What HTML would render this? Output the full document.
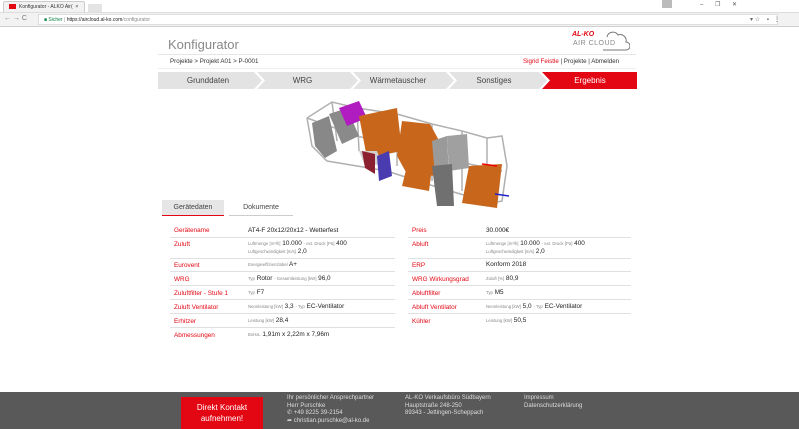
<!DOCTYPE html>
<html><head><meta charset="utf-8"><style>
*{margin:0;padding:0;box-sizing:border-box}
body{width:799px;height:429px;overflow:hidden;background:#fff;font-family:"Liberation Sans",sans-serif;position:relative;color:#333}
.abs{position:absolute}
.tabbar{left:0;top:0;width:799px;height:13px;background:#fff}
.addr{left:0;top:12px;width:799px;height:15px;background:#f2f2f2;border-bottom:1px solid #d0d0d0;border-top:1px solid #ddd}
.t{font-size:5px;white-space:nowrap}
.step{top:72px;height:17px;font-size:8px;color:#444;text-align:center;line-height:17px}
.lab{font-size:6.4px;color:#e30613;white-space:nowrap}
.val{font-size:6.4px;color:#222;white-space:nowrap}
.sm{font-size:4.3px;color:#888}
.hr{height:1px;background:#e0e0e0}
.foot{font-size:6px;color:#ddd;line-height:7.5px;white-space:nowrap}
</style></head><body>
<div class="abs tabbar"></div>
<div class="abs" style="left:3px;top:1px;width:82px;height:12px;background:#f2f2f2;border:1px solid #ccc;border-bottom:none;border-radius:2px 2px 0 0"></div>
<div class="abs" style="left:9px;top:4px;width:7px;height:5px;background:#e30613"></div>
<div class="abs t" style="left:19px;top:4px;color:#333">Konfigurator - ALKO Air(&nbsp;&nbsp;×</div>
<div class="abs" style="left:88px;top:4px;width:14px;height:8px;background:#e4e4e4"></div>
<div class="abs" style="left:662px;top:0;width:10px;height:8px;background:#bbb"></div>
<div class="abs t" style="left:700px;top:1px;color:#555;font-size:6px">–&nbsp;&nbsp;&nbsp;&nbsp;&nbsp;&nbsp;&nbsp;❐&nbsp;&nbsp;&nbsp;&nbsp;&nbsp;&nbsp;&nbsp;✕</div>
<div class="abs addr"></div>
<div class="abs t" style="left:4px;top:15px;color:#777;font-size:7px">←&nbsp;→&nbsp;C</div>
<div class="abs" style="left:38px;top:14px;width:740px;height:11px;background:#fff;border:1px solid #ddd"></div>
<div class="abs t" style="left:44px;top:17px;color:#0b8043">■ Sicher <span style="color:#999">|</span> <span style="color:#222">https://aircloud.al-ko.com</span><span style="color:#888">/configurator</span></div>
<div class="abs t" style="left:750px;top:16px;color:#666;font-size:6px">▾ ☆&nbsp;&nbsp;&nbsp;&nbsp;▪&nbsp;&nbsp;&nbsp;⋮</div>

<div class="abs" style="left:168px;top:37px;font-size:13px;color:#888">Konfigurator</div>
<div class="abs" style="left:158px;top:54px;width:478px;height:1px;background:#e6e6e6"></div>
<div class="abs" style="left:572px;top:31px;font-size:7px;font-weight:bold;color:#e30613;font-style:italic">AL-KO</div>
<div class="abs" style="left:573px;top:40px;font-size:7px;color:#888;letter-spacing:.5px">AIR CLOUD</div>
<svg class="abs" style="left:600px;top:30px" width="30" height="22"><path d="M3 20 H26 a4 4 0 0 0 0-8 a6 6 0 0 0-8-7 a6 6 0 0 0-11 2" fill="none" stroke="#777" stroke-width="1"/></svg>
<div class="abs" style="left:170px;top:58px;font-size:6.2px;color:#333">Projekte &gt; Projekt A01 &gt; P-0001</div>
<div class="abs" style="left:523px;top:58px;font-size:6.2px;color:#333;white-space:nowrap"><span style="color:#e30613">Sigrid Feistle</span> | Projekte | Abmelden</div>
<div class="abs" style="left:158px;top:68px;width:478px;height:1px;background:#eee"></div>

<svg class="abs" style="left:158px;top:72px" width="479" height="17">
<polygon points="0,0 96,0 104,8.5 96,17 0,17" fill="#e3e3e3"/>
<polygon points="99,0 192,0 200,8.5 192,17 99,17 107,8.5" fill="#e3e3e3"/>
<polygon points="195,0 288,0 296,8.5 288,17 195,17 203,8.5" fill="#e3e3e3"/>
<polygon points="291,0 381,0 389,8.5 381,17 291,17 299,8.5" fill="#e3e3e3"/>
<polygon points="384,0 479,0 479,17 384,17 392,8.5" fill="#e30613"/>
</svg>
<div class="abs step" style="left:158px;width:100px">Grunddaten</div>
<div class="abs step" style="left:255px;width:95px">WRG</div>
<div class="abs step" style="left:350px;width:96px">Wärmetauscher</div>
<div class="abs step" style="left:446px;width:96px">Sonstiges</div>
<div class="abs step" style="left:544px;width:92px;color:#fff">Ergebnis</div>

<svg class="abs" style="left:297px;top:96px" width="215" height="118">
<g stroke="#b0b0b0" stroke-width="1.5" fill="none">
<polyline points="10,22 35,6 60,12 100,18 135,28 165,35 190,42"/>
<polyline points="10,22 15,50 30,65 90,75 130,88 170,100 190,108 205,105 210,70 205,40 190,42"/>
<line x1="35" y1="6" x2="40" y2="45"/><line x1="60" y1="12" x2="62" y2="55"/>
<line x1="100" y1="18" x2="100" y2="70"/><line x1="135" y1="28" x2="135" y2="85"/>
<line x1="165" y1="35" x2="165" y2="95"/><line x1="190" y1="42" x2="190" y2="108"/>
<polyline points="10,22 60,40 100,50 135,60 205,75"/>
</g>
<polygon points="15,27 32,20 40,55 28,62 18,50" fill="#888"/>
<polygon points="32,18 50,12 62,40 45,48" fill="#8a8a8a"/>
<polygon points="42,12 62,5 70,22 50,30" fill="#b01cc0"/>
<polygon points="62,20 100,12 105,55 70,62" fill="#c8671c"/>
<polygon points="62,55 80,55 85,68 68,70" fill="#d0d0d0"/>
<polygon points="105,25 133,28 145,50 140,80 110,78 100,60" fill="#c8671c"/>
<polygon points="135,45 150,40 152,80 138,80" fill="#9a9a9a"/>
<polygon points="150,40 170,38 172,72 152,75" fill="#a0a0a0"/>
<polygon points="110,70 135,72 132,95 105,90" fill="#c8671c"/>
<polygon points="135,70 155,68 157,110 140,110" fill="#707070"/>
<polygon points="172,70 205,68 200,112 165,107" fill="#c8671c"/>
<polygon points="80,60 92,55 95,80 82,85" fill="#4a3bb0"/>
<polygon points="65,55 78,58 78,78 68,72" fill="#8b2030"/>
<line x1="185" y1="68" x2="200" y2="70" stroke="#e00" stroke-width="1.5"/>
<line x1="198" y1="98" x2="212" y2="100" stroke="#22c" stroke-width="1.5"/>
</svg>

<div class="abs" style="left:162px;top:200px;width:62px;height:16px;background:#e6e6e6;border-bottom:1px solid #e30613;font-size:7px;color:#444;text-align:center;line-height:15px">Gerätedaten</div>
<div class="abs" style="left:229px;top:200px;width:64px;height:16px;border-bottom:1px solid #ccc;font-size:7px;color:#444;text-align:center;line-height:15px">Dokumente</div>

<div class="abs lab" style="left:174px;top:227px">Gerätename</div><div class="abs val" style="left:248px;top:227px">AT4-F 20x12/20x12 - Wetterfest</div>
<div class="abs hr" style="left:170px;top:237px;width:225px"></div>
<div class="abs lab" style="left:174px;top:241px">Zuluft</div><div class="abs val" style="left:248px;top:240px"><span class="sm">Luftmenge [m³/h]</span> 10.000 <span class="sm">- ext. Druck [Pa]</span> 400</div>
<div class="abs val" style="left:248px;top:248px"><span class="sm">Luftgeschwindigkeit [m/s]</span> 2,0</div>
<div class="abs hr" style="left:170px;top:258px;width:225px"></div>
<div class="abs lab" style="left:174px;top:262px">Eurovent</div><div class="abs val" style="left:248px;top:261px"><span class="sm">Energieeffizienzlabel</span> A+</div>
<div class="abs hr" style="left:170px;top:271px;width:225px"></div>
<div class="abs lab" style="left:174px;top:276px">WRG</div><div class="abs val" style="left:248px;top:275px"><span class="sm">Typ</span> Rotor <span class="sm">- Gesamtleistung [kW]</span> 96,0</div>
<div class="abs hr" style="left:170px;top:285px;width:225px"></div>
<div class="abs lab" style="left:174px;top:290px">Zuluftfilter - Stufe 1</div><div class="abs val" style="left:248px;top:289px"><span class="sm">Typ</span> F7</div>
<div class="abs hr" style="left:170px;top:299px;width:225px"></div>
<div class="abs lab" style="left:174px;top:304px">Zuluft Ventilator</div><div class="abs val" style="left:248px;top:303px"><span class="sm">Nennleistung [kW]</span> 3,3 <span class="sm">- Typ</span> EC-Ventilator</div>
<div class="abs hr" style="left:170px;top:313px;width:225px"></div>
<div class="abs lab" style="left:174px;top:318px">Erhitzer</div><div class="abs val" style="left:248px;top:317px"><span class="sm">Leistung [kW]</span> 28,4</div>
<div class="abs hr" style="left:170px;top:327px;width:225px"></div>
<div class="abs lab" style="left:174px;top:332px">Abmessungen</div><div class="abs val" style="left:248px;top:331px"><span class="sm">BxHxL</span> 1,91m x 2,22m x 7,96m</div>

<div class="abs lab" style="left:412px;top:227px">Preis</div><div class="abs val" style="left:486px;top:227px">30.000€</div>
<div class="abs hr" style="left:408px;top:237px;width:223px"></div>
<div class="abs lab" style="left:412px;top:241px">Abluft</div><div class="abs val" style="left:486px;top:240px"><span class="sm">Luftmenge [m³/h]</span> 10.000 <span class="sm">- ext. Druck [Pa]</span> 400</div>
<div class="abs val" style="left:486px;top:248px"><span class="sm">Luftgeschwindigkeit [m/s]</span> 2,0</div>
<div class="abs hr" style="left:408px;top:258px;width:223px"></div>
<div class="abs lab" style="left:412px;top:262px">ERP</div><div class="abs val" style="left:486px;top:261px">Konform 2018</div>
<div class="abs hr" style="left:408px;top:271px;width:223px"></div>
<div class="abs lab" style="left:412px;top:276px">WRG Wirkungsgrad</div><div class="abs val" style="left:486px;top:275px"><span class="sm">Zuluft [%]</span> 80,9</div>
<div class="abs hr" style="left:408px;top:285px;width:223px"></div>
<div class="abs lab" style="left:412px;top:290px">Abluftfilter</div><div class="abs val" style="left:486px;top:289px"><span class="sm">Typ</span> M5</div>
<div class="abs hr" style="left:408px;top:299px;width:223px"></div>
<div class="abs lab" style="left:412px;top:304px">Abluft Ventilator</div><div class="abs val" style="left:486px;top:303px"><span class="sm">Nennleistung [kW]</span> 5,0 <span class="sm">- Typ</span> EC-Ventilator</div>
<div class="abs hr" style="left:408px;top:313px;width:223px"></div>
<div class="abs lab" style="left:412px;top:318px">Kühler</div><div class="abs val" style="left:486px;top:317px"><span class="sm">Leistung [kW]</span> 50,5</div>

<div class="abs" style="left:0;top:392px;width:799px;height:37px;background:#595959"></div>
<div class="abs" style="left:181px;top:397px;width:82px;height:32px;background:#e30613;color:#fff;font-size:8px;text-align:center;line-height:11px;padding-top:5px">Direkt Kontakt<br>aufnehmen!</div>
<div class="abs foot" style="left:287px;top:395px">Ihr persönlicher Ansprechpartner<br>Herr Purschke<br>✆ +49 8225 39-2154<br>➦ christian.purschke@al-ko.de</div>
<div class="abs foot" style="left:405px;top:395px">AL-KO Verkaufsbüro Südbayern<br>Hauptstraße 248-250<br>89343 - Jettingen-Scheppach</div>
<div class="abs foot" style="left:524px;top:395px">Impressum<br>Datenschutzerklärung</div>
</body></html>
